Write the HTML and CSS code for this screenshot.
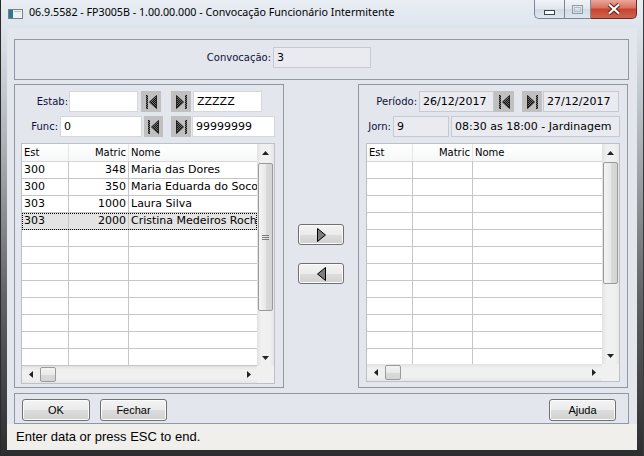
FILE: index.html
```html
<!DOCTYPE html>
<html>
  <head>
    <title>Convocação Funcionário Intermitente</title>
    <link rel="stylesheet" href="styles.css">
  </head>
  <body>
    <div class="window">
      <div class="titlebar">
        <svg class="app-icon" width="15" height="10" viewBox="0 0 15 10">
          <rect x="0.5" y="0.5" width="14" height="9" fill="#eef1f4" stroke="#74808c"/>
          <rect x="1" y="1" width="4" height="8" fill="#2d7b8a"/>
          <rect x="6" y="2" width="7" height="1" fill="#b9c2cb"/>
        </svg>
        <span class="title">06.9.5582 - FP3005B - 1.00.00.000 - Convocação Funcionário Intermitente</span>
        <div class="caption">
          <span class="cap cap-min">
            <svg width="11" height="5" viewBox="0 0 11 5"><rect x="0.5" y="0.5" width="10" height="4" fill="#fff" stroke="#3b4653"/></svg>
          </span>
          <span class="cap cap-max">
            <svg width="11" height="9" viewBox="0 0 11 9"><rect x="0.5" y="0.5" width="10" height="8" fill="none" stroke="#8d99a6"/><rect x="2.5" y="2.5" width="6" height="4" fill="none" stroke="#b3bcc6"/></svg>
          </span>
          <span class="cap cap-close">
            <svg width="14" height="12" viewBox="0 0 14 12">
              <path d="M2 1.5 L12 10.5 M12 1.5 L2 10.5" stroke="#5b2219" stroke-width="4.2"/>
              <path d="M2 1.5 L12 10.5 M12 1.5 L2 10.5" stroke="#fff" stroke-width="2.2"/>
            </svg>
          </span>
        </div>
      </div>

      <div class="client">
        <div class="box box-top">
          <span class="label lbl-conv">Convocação:</span>
          <span class="field ro f-conv">3</span>
        </div>

        <div class="main">
          <!-- funcionarios disponiveis -->
          <div class="box panel">
            <div class="frow">
              <span class="label lbl-estab">Estab:</span>
              <span class="field f-estab1"></span>
              <span class="nav nav-first n-estab1">
                <svg width="11" height="14" viewBox="0 0 11 14">
                  <defs>
                    <pattern id="dots" width="2" height="2" patternUnits="userSpaceOnUse">
                      <rect width="2" height="2" fill="#6e6e6e"/>
                      <rect width="1" height="1" fill="#111"/>
                      <rect x="1" y="1" width="1" height="1" fill="#111"/>
                    </pattern>
                  </defs>
                  <rect x="0" y="0" width="2" height="14" fill="url(#dots)"/>
                  <polygon points="10.5,0.5 3.5,7 10.5,13.5" fill="url(#dots)" stroke="#222"/>
                </svg>
              </span>
              <span class="nav nav-last n-estab2">
                <svg width="11" height="14" viewBox="0 0 11 14">
                  <polygon points="0.5,0.5 7.5,7 0.5,13.5" fill="url(#dots)" stroke="#222"/>
                  <rect x="9" y="0" width="2" height="14" fill="url(#dots)"/>
                </svg>
              </span>
              <span class="field f-estab2">ZZZZZ</span>
            </div>
            <div class="frow frow-2">
              <span class="label lbl-func">Func:</span>
              <span class="field f-func1">0</span>
              <span class="nav nav-first n-func1">
                <svg width="11" height="14" viewBox="0 0 11 14">
                  <rect x="0" y="0" width="2" height="14" fill="url(#dots)"/>
                  <polygon points="10.5,0.5 3.5,7 10.5,13.5" fill="url(#dots)" stroke="#222"/>
                </svg>
              </span>
              <span class="nav nav-last n-func2">
                <svg width="11" height="14" viewBox="0 0 11 14">
                  <polygon points="0.5,0.5 7.5,7 0.5,13.5" fill="url(#dots)" stroke="#222"/>
                  <rect x="9" y="0" width="2" height="14" fill="url(#dots)"/>
                </svg>
              </span>
              <span class="field f-func2">99999999</span>
            </div>

            <div class="grid grid-left">
              <div class="grid-body">
                <div class="grid-head"><span>Est</span><span class="num">Matric</span><span>Nome</span></div>
                <div class="grid-row"><span>300</span><span class="num">348</span><span>Maria das Dores</span></div>
                <div class="grid-row"><span>300</span><span class="num">350</span><span>Maria Eduarda do Socorro</span></div>
                <div class="grid-row"><span>303</span><span class="num">1000</span><span>Laura Silva</span></div>
                <div class="grid-row selected"><span>303</span><span class="num">2000</span><span>Cristina Medeiros Rocha</span></div>
                <div class="grid-row"><span></span><span></span><span></span></div>
                <div class="grid-row"><span></span><span></span><span></span></div>
                <div class="grid-row"><span></span><span></span><span></span></div>
                <div class="grid-row"><span></span><span></span><span></span></div>
                <div class="grid-row"><span></span><span></span><span></span></div>
                <div class="grid-row"><span></span><span></span><span></span></div>
                <div class="grid-row"><span></span><span></span><span></span></div>
                <div class="grid-row"><span></span><span></span><span></span></div>
              </div>
              <div class="vscroll">
                <span class="arrow"><svg width="7" height="4" viewBox="0 0 7 4"><polygon points="0,4 3.5,0 7,4" fill="#222"/></svg></span>
                <span class="vthumb thumb-left"><svg width="7" height="5" viewBox="0 0 7 5"><path d="M0 0.5H7M0 2.5H7M0 4.5H7" stroke="#7c7c7c"/></svg></span>
                <span class="arrow arrow-end"><svg width="7" height="4" viewBox="0 0 7 4"><polygon points="0,0 3.5,4 7,0" fill="#222"/></svg></span>
              </div>
              <div class="hscroll">
                <span class="arrow"><svg width="4" height="7" viewBox="0 0 4 7"><polygon points="4,0 0,3.5 4,7" fill="#222"/></svg></span>
                <span class="hthumb"></span>
                <span class="arrow arrow-end"><svg width="4" height="7" viewBox="0 0 4 7"><polygon points="0,0 4,3.5 0,7" fill="#222"/></svg></span>
              </div>
              <div class="corner"></div>
            </div>
          </div>

          <div class="mid">
            <span class="btn btn-move">
              <svg width="9" height="14" viewBox="0 0 9 14"><polygon points="0.5,0.5 8.5,7 0.5,13.5" fill="#7d7d7d" stroke="#000"/></svg>
            </span>
            <span class="btn btn-move">
              <svg width="9" height="14" viewBox="0 0 9 14"><polygon points="8.5,0.5 0.5,7 8.5,13.5" fill="#7d7d7d" stroke="#000"/></svg>
            </span>
          </div>

          <!-- funcionarios convocados -->
          <div class="box panel">
            <div class="frow">
              <span class="label lbl-periodo">Período:</span>
              <span class="field ro f-per1">26/12/2017</span>
              <span class="nav nav-first n-per1">
                <svg width="11" height="14" viewBox="0 0 11 14">
                  <rect x="0" y="0" width="2" height="14" fill="url(#dots)"/>
                  <polygon points="10.5,0.5 3.5,7 10.5,13.5" fill="url(#dots)" stroke="#222"/>
                </svg>
              </span>
              <span class="nav nav-last n-per2">
                <svg width="11" height="14" viewBox="0 0 11 14">
                  <polygon points="0.5,0.5 7.5,7 0.5,13.5" fill="url(#dots)" stroke="#222"/>
                  <rect x="9" y="0" width="2" height="14" fill="url(#dots)"/>
                </svg>
              </span>
              <span class="field ro f-per2">27/12/2017</span>
            </div>
            <div class="frow frow-2">
              <span class="label lbl-jorn">Jorn:</span>
              <span class="field ro f-jorn1">9</span>
              <span class="field ro f-jorn2">08:30 as 18:00 - Jardinagem</span>
            </div>

            <div class="grid grid-right">
              <div class="grid-body">
                <div class="grid-head"><span>Est</span><span class="num">Matric</span><span>Nome</span></div>
                <div class="grid-row"><span></span><span></span><span></span></div>
                <div class="grid-row"><span></span><span></span><span></span></div>
                <div class="grid-row"><span></span><span></span><span></span></div>
                <div class="grid-row"><span></span><span></span><span></span></div>
                <div class="grid-row"><span></span><span></span><span></span></div>
                <div class="grid-row"><span></span><span></span><span></span></div>
                <div class="grid-row"><span></span><span></span><span></span></div>
                <div class="grid-row"><span></span><span></span><span></span></div>
                <div class="grid-row"><span></span><span></span><span></span></div>
                <div class="grid-row"><span></span><span></span><span></span></div>
                <div class="grid-row"><span></span><span></span><span></span></div>
                <div class="grid-row"><span></span><span></span><span></span></div>
              </div>
              <div class="vscroll">
                <span class="arrow"><svg width="7" height="4" viewBox="0 0 7 4"><polygon points="0,4 3.5,0 7,4" fill="#222"/></svg></span>
                <span class="vthumb thumb-right"></span>
                <span class="arrow arrow-end"><svg width="7" height="4" viewBox="0 0 7 4"><polygon points="0,0 3.5,4 7,0" fill="#222"/></svg></span>
              </div>
              <div class="hscroll">
                <span class="arrow"><svg width="4" height="7" viewBox="0 0 4 7"><polygon points="4,0 0,3.5 4,7" fill="#222"/></svg></span>
                <span class="hthumb"></span>
                <span class="arrow arrow-end"><svg width="4" height="7" viewBox="0 0 4 7"><polygon points="0,0 4,3.5 0,7" fill="#222"/></svg></span>
              </div>
              <div class="corner"></div>
            </div>
          </div>
        </div>

        <div class="box box-bottom">
          <span class="btn btn-ok">OK</span>
          <span class="btn btn-close">Fechar</span>
          <span class="btn btn-help">Ajuda</span>
        </div>

        <div class="statusbar">Enter data or press ESC to end.</div>
      </div>
    </div>
  </body>
</html>
```

FILE: styles.css
```css
body {
  margin: 0;
  padding: 0;
  background: #2b2b2b;
  font-family: "DejaVu Sans", sans-serif;
  font-size: 11px;
  color: #000;
}

.window {
  width: 644px;
  height: 456px;
  box-sizing: border-box;
  padding-bottom: 6px;
  display: flex;
  flex-direction: column;
  overflow: hidden;
  background: linear-gradient(#e9eef4 0, #dde4ec 28px, #a9afb5 150px, #5e6165 300px, #2c2d2f 456px);
  box-shadow: inset 1px 0 #2a2a2a, inset -1px 0 #3a3a3a;
}

/* title bar */
.titlebar {
  height: 28px;
  display: flex;
  align-items: flex-start;
  flex-shrink: 0;
}
.app-icon {
  margin: 9px 0 0 8px;
}
.title {
  font-family: "Noto Sans", sans-serif;
  font-size: 10.7px;
  margin: 5px 0 0 6px;
  white-space: nowrap;
}
.caption {
  margin-left: auto;
  margin-right: 7px;
  display: flex;
  height: 19px;
}
.cap {
  display: flex;
  align-items: center;
  justify-content: center;
  height: 19px;
  box-sizing: border-box;
  border: 1px solid #7b8796;
  border-top: none;
  background: linear-gradient(#f1f4f8, #e1e7ee 50%, #d2dae4 51%, #dfe6ee);
}
.cap-min {
  width: 30px;
  border-radius: 0 0 0 5px;
  border-right: none;
  align-items: flex-end;
  padding-bottom: 3px;
}
.cap-max {
  width: 27px;
}
.cap-close {
  width: 46px;
  border-left: none;
  border-color: #6b2a22;
  border-radius: 0 0 5px 0;
  background: linear-gradient(#e9a79b, #d8705e 45%, #c7432d 50%, #cf6450);
}

/* client area */
.client {
  margin-left: 7px;
  width: 630px;
  flex: 1;
  display: flex;
  flex-direction: column;
  background: #e3e6ed;
}
.box {
  border: 1px solid #8f98a3;
  box-sizing: border-box;
}
.box-top {
  margin: 11px 8px 0 7px;
  height: 41px;
  display: flex;
  align-items: flex-start;
  padding-top: 7px;
}
.label {
  font-size: 10px;
  color: #10103a;
  text-align: right;
  line-height: 21px;
  height: 21px;
  white-space: nowrap;
}
.lbl-conv {
  width: 256px;
}
.field {
  display: block;
  box-sizing: border-box;
  height: 21px;
  line-height: 19px;
  padding-left: 3px;
  background: #fff;
  border: 1px solid #d3d8df;
  white-space: nowrap;
  overflow: hidden;
}
.field.ro {
  background: #e9ebf0;
  border-color: #c5cad2;
}
.f-conv {
  margin-left: 2px;
  width: 98px;
}

.main {
  margin: 4px 9px 0 7px;
  height: 304px;
  display: flex;
}
.panel {
  width: 270px;
  padding-top: 6px;
  display: flex;
  flex-direction: column;
}
.frow {
  display: flex;
  height: 21px;
}
.frow-2 {
  margin-top: 4px;
}

.nav {
  display: flex;
  align-items: center;
  justify-content: center;
  width: 20px;
  height: 21px;
  background: #c0c0c0;
}
.lbl-estab { width: 53px; }
.f-estab1 { margin-left: 1px; width: 69px; }
.n-estab1 { margin-left: 3px; }
.n-estab2 { margin-left: 10px; }
.f-estab2 { margin-left: 2px; width: 69px; }
.lbl-func { width: 43px; }
.f-func1 { margin-left: 2px; width: 82px; }
.n-func1 { margin-left: 2px; width: 19px; }
.n-func2 { margin-left: 8px; }
.f-func2 { margin-left: 1px; width: 83px; }

.lbl-periodo { width: 58px; }
.f-per1 { margin-left: 2px; width: 75px; }
.n-per2 { margin-left: 8px; }
.f-per2 { margin-left: 1px; width: 76px; }
.lbl-jorn { width: 32px; }
.f-jorn1 { margin-left: 2px; width: 56px; }
.f-jorn2 { margin-left: 2px; width: 169px; }

/* grids */
.grid {
  margin-top: 6px;
  box-sizing: border-box;
  width: 254px;
  border: 1px solid #bcc1c8;
  background: #fff;
  display: grid;
  grid-template-columns: 1fr 17px;
  grid-template-rows: 1fr 17px;
}
.grid-left {
  margin-left: 6px;
  height: 241px;
}
.grid-right {
  margin-left: 7px;
  height: 239px;
}
.grid-body {
  overflow: hidden;
}
.grid-head,
.grid-row {
  display: grid;
  white-space: nowrap;
}
.grid-left .grid-head,
.grid-left .grid-row {
  grid-template-columns: 47px 60px 1fr;
}
.grid-right .grid-head,
.grid-right .grid-row {
  grid-template-columns: 46px 60px 1fr;
}
.grid-head {
  height: 18px;
  font-size: 10px;
  line-height: 17px;
  background: linear-gradient(#fff, #f6f7f8);
  border-bottom: 1px solid #d6d6d6;
  box-sizing: border-box;
}
.grid-head span {
  padding: 0 2px;
  border-right: 1px solid #e6e6e6;
  overflow: hidden;
}
.grid-row {
  height: 17px;
  line-height: 16px;
  box-sizing: border-box;
  border-bottom: 1px solid #c6c6c6;
}
.grid-row span {
  padding: 0 2px;
  border-right: 1px solid #c6c6c6;
  overflow: hidden;
}
.grid-head span:last-child,
.grid-row span:last-child {
  border-right: none;
}
.num {
  text-align: right;
}
.grid-row.selected {
  background: #e4e4e4;
  outline: 1px dotted #000;
  outline-offset: -1px;
}

.vscroll {
  display: flex;
  flex-direction: column;
  align-items: center;
  background: linear-gradient(90deg, #e2e2e2, #f0f0f0 25%, #f0f0f0 75%, #e6e6e6);
}
.hscroll {
  display: flex;
  align-items: center;
  background: linear-gradient(#e2e2e2, #f0f0f0 25%, #f0f0f0 75%, #e6e6e6);
}
.arrow {
  display: flex;
  align-items: center;
  justify-content: center;
  width: 17px;
  height: 17px;
  flex-shrink: 0;
}
.arrow-end {
  margin-top: auto;
}
.hscroll .arrow-end {
  margin-top: 0;
  margin-left: auto;
}
.vthumb {
  display: flex;
  align-items: center;
  justify-content: center;
  margin-top: 2px;
  width: 15px;
  box-sizing: border-box;
  border: 1px solid #9a9a9a;
  border-radius: 2px;
  background: linear-gradient(90deg, #f4f4f4, #e9e9e9 50%, #dadada 51%, #d4d4d4);
}
.thumb-left {
  height: 148px;
}
.thumb-right {
  margin-top: 1px;
  height: 122px;
}
.hthumb {
  margin-left: 1px;
  width: 16px;
  height: 15px;
  box-sizing: border-box;
  border: 1px solid #9a9a9a;
  border-radius: 2px;
  background: linear-gradient(#f4f4f4, #e9e9e9 50%, #dadada 51%, #d4d4d4);
}
.corner {
  background: #f0f0f0;
}

/* move buttons */
.mid {
  width: 74px;
  display: flex;
  flex-direction: column;
  align-items: center;
  padding-top: 140px;
  gap: 18px;
}
.btn {
  display: flex;
  align-items: center;
  justify-content: center;
  box-sizing: border-box;
  border: 1px solid #707070;
  border-radius: 3px;
  background: linear-gradient(#f3f3f3, #ebebeb 50%, #dddddd 51%, #d0d0d0);
  box-shadow: inset 0 0 0 1px #fbfbfb;
  font-family: "Liberation Sans", sans-serif;
  font-size: 11px;
}
.btn-move {
  width: 46px;
  height: 21px;
}

.box-bottom {
  margin: 5px 8px 0 7px;
  height: 31px;
  display: flex;
  align-items: flex-start;
  padding: 5px 12px 0 7px;
}
.btn-ok,
.btn-close,
.btn-help {
  width: 67px;
  height: 22px;
}
.btn-ok {
  width: 68px;
}
.btn-close {
  margin-left: 10px;
}
.btn-help {
  margin-left: auto;
}

.statusbar {
  height: 26px;
  line-height: 25px;
  padding-left: 9px;
  background: #f0efec;
  font-family: "Liberation Sans", sans-serif;
  font-size: 13px;
  color: #000;
}
```
